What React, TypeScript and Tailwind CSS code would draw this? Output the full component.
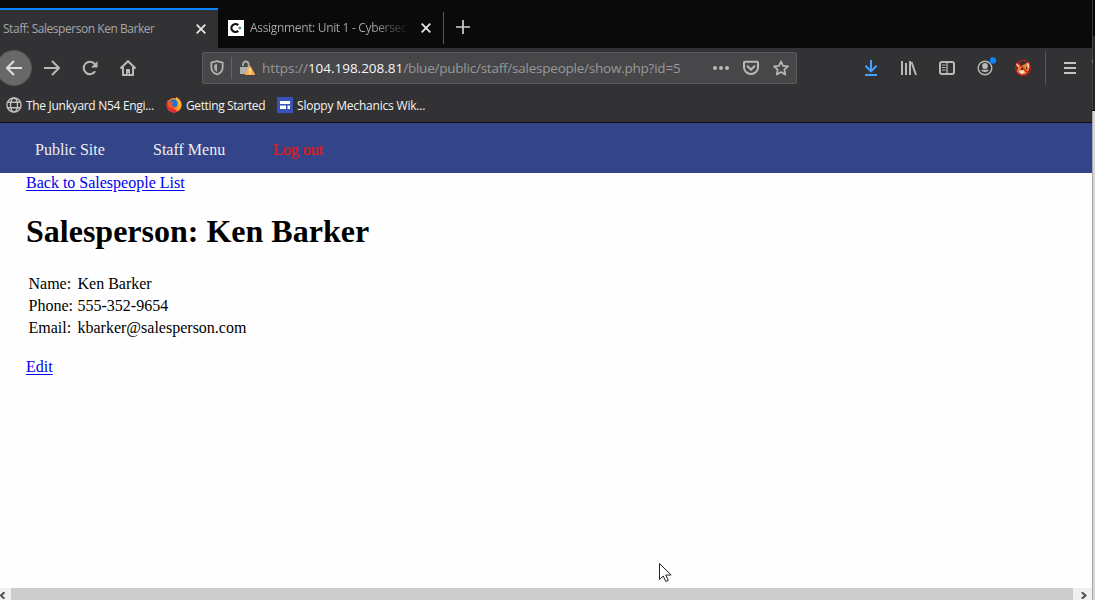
import React from "react";

const ui = "font-['Open_Sans','Noto_Sans',sans-serif] whitespace-nowrap";
const ico = "fill-none stroke-[#b9b9b7] stroke-2 shrink-0";

function CloseIcon() {
  return (
    <svg className="h-[10px] w-[10px] shrink-0 fill-none stroke-[#e6e6e4] stroke-[1.8]" viewBox="0 0 10 10">
      <path d="M.7.7 9.3 9.3M9.3.7.7 9.3" />
    </svg>
  );
}

function Tabs() {
  return (
    <div className="flex h-12 bg-[#0a0a0a] pt-2">
      <div className="flex w-[218px] items-center border-t-2 border-[#0a84ff] bg-[#323234] pl-[3px]">
        <span className={`${ui} w-[193px] text-[12px] leading-[38px] tracking-[-0.46px] text-[#a6a5ab]`}>Staff: Salesperson Ken Barker</span>
        <CloseIcon />
      </div>
      <div className="flex w-[225px] items-center pl-[10px]">
        <svg className="mr-[6px] h-4 w-4 shrink-0" viewBox="0 0 16 16">
          <path fill="#fff" d="M0 0h16v16H0z" />
          <path d="M10.2 5.1A4 4 0 1 0 10.2 10.9" fill="none" stroke="#111" strokeWidth="2.2" />
          <circle cx="11.8" cy="8" r="1.4" fill="#4d8c8c" />
        </svg>
        <span className="w-[160px] shrink-0">
          <span className={`${ui} inline-block bg-gradient-to-r from-[#a8a8a8] from-80% to-[#1c1c1c] bg-clip-text text-[12px] leading-10 tracking-[-0.33px] text-transparent`}>Assignment: Unit 1 - Cybersec</span>
        </span>
        <span className="w-[11px] shrink-0" />
        <CloseIcon />
      </div>
      <div className="mt-1 h-8 w-px bg-[#58585c]" />
      <svg className="mt-3 ml-3 h-[14px] w-[14px] fill-none stroke-[#cfcfcd] stroke-[1.7]" viewBox="0 0 14 14">
        <path d="M7 0v14M0 7h14" />
      </svg>
    </div>
  );
}

function Toolbar() {
  return (
    <div className="flex h-10 items-center bg-[#323234]">
      <div className="-ml-1 flex h-9 w-9 shrink-0 items-center justify-center rounded-full border border-[#565657] bg-[#68686a]">
        <svg className={`${ico} h-4 w-4 stroke-[#dededc]`} viewBox="0 0 16 16"><path d="M16 8H1M8 1 1 8l7 7" /></svg>
      </div>
      <svg className={`${ico} ml-3 h-4 w-4`} viewBox="0 0 16 16"><path d="M0 8h15M8 1l7 7-7 7" /></svg>
      <svg className={`${ico} ml-[22px] h-4 w-4`} viewBox="0 0 16 16">
        <path d="M13.2 11.2A6.2 6.2 0 1 1 12.7 4" />
        <path d="M15.5 1v6.5H9z" fill="#b9b9b7" stroke="none" />
      </svg>
      <svg className={`${ico} ml-[22px] h-4 w-4`} viewBox="0 0 16 16">
        <path d="M.4 8.6 8 1.2l7.6 7.4M3 7v8h10V7" />
        <path d="M6 9h4v6H8.8v-2H7.6v2H6z" fill="#b9b9b7" stroke="none" />
      </svg>
      <div className="ml-[66px] flex h-8 w-[595px] shrink-0 items-center rounded-[2px] border border-[#5c5c5e] bg-[#474749] pl-[7px]">
        <svg className="h-4 w-[14px] shrink-0 fill-none stroke-[#b0b0ae] stroke-[1.8]" viewBox="0 0 14 16">
          <path d="M7 1.2 12.7 2.6V7c0 4-2.2 6.3-5.7 7.4C3.5 13.3 1.3 11 1.3 7V2.6z" strokeLinejoin="round" />
          <path d="M7 4 4.2 4.7V7c0 2.400 1 3.900 2.800 4.900z" fill="#b0b0ae" stroke="none" />
        </svg>
        <div className="ml-[7px] h-[22px] w-px bg-[#5e6672]" />
        <svg className="ml-[8px] h-4 w-4 shrink-0" viewBox="0 0 16 16">
          <path d="M3 6V4.300a2.800 2.800 0 0 1 5.600 0V7.500" fill="none" stroke="#b0b0ae" strokeWidth="1.8" />
          <path d="M0 7h9v7H0z" fill="#b0b0ae" />
          <path d="M10 6 14.700 14.500H5.300z" fill="#ffab45" stroke="#ffab45" />
          <path d="M9.300 8.500h1.400v3H9.300zM9.300 12.500h1.400v1.400H9.300z" fill="#fff" />
        </svg>
        <span className={`${ui} ml-[6px] w-[451px] text-[13.5px] leading-[30px] tracking-[-0.02px] text-[#98989a]`}>
          https://<span className="text-[#f5f5f5]">104.198.208.81</span><span className="tracking-[-0.23px]">/blue/public/staff/salespeople/show.php?id=5</span>
        </span>
        <svg className="h-4 w-4 shrink-0 fill-[#b9b9b7]" viewBox="0 0 16 16"><circle cx="2" cy="8" r="2" /><circle cx="8" cy="8" r="2" /><circle cx="14" cy="8" r="2" /></svg>
        <svg className={`${ico} ml-[14px] h-4 w-4`} viewBox="0 0 16 16">
          <path d="M2 1.700h12a1 1 0 0 1 1 1V7.500a7 6.500 0 0 1-14 0V2.700a1 1 0 0 1 1-1z" /><path d="m4.500 6.300 3.500 3.300 3.500-3.300" strokeLinecap="round" />
        </svg>
        <svg className="ml-[14px] h-4 w-4 shrink-0 fill-none stroke-[#b9b9b7] stroke-[1.7]" viewBox="0 0 16 16">
          <path d="m8 1.300 2 4.600 5 .5-3.700 3.300 1 4.900L8 12.100l-4.300 2.500 1-4.900L1 6.400l5-.5z" strokeLinejoin="round" />
        </svg>
      </div>
      <svg className="ml-[66px] h-4 w-4 shrink-0 fill-none stroke-[#45a1ff] stroke-2" viewBox="0 0 16 16"><path d="M8 0v11M2.500 5.800 8 11.300l5.500-5.500M2 15h12" /></svg>
      <svg className={`${ico} ml-[22px] h-4 w-4`} viewBox="0 0 16 16"><path d="M1 1v14M5 3v12M9 1v14M10.500 2l4.500 13" /></svg>
      <svg className={`${ico} ml-[22px] h-4 w-4`} viewBox="0 0 16 16"><rect x="1" y="2" width="14" height="12" rx="2" /><path d="M8 2v12" strokeWidth="1.300" /><path d="M3 5h3.500M3 7.500h3.500M3 10h3.500" strokeWidth="1" /></svg>
      <svg className="-mt-[3px] ml-[22px] h-[19px] w-[19px] shrink-0" viewBox="0 0 19 19">
        <circle cx="8" cy="11" r="6.800" fill="none" stroke="#b9b9b7" strokeWidth="1.400" />
        <circle cx="8" cy="9" r="2.900" fill="#b9b9b7" />
        <path d="M3.800 12.800h8.400a4.800 4.800 0 0 1-8.400 0z" fill="#b9b9b7" />
        <circle cx="16" cy="3.500" r="3.200" fill="#0a84ff" />
      </svg>
      <svg className="ml-[19px] h-4 w-4 shrink-0" viewBox="0 0 16 16">
        <path d="M3 7 2 3l4 3 4-2 3-2 1 4v4l-3 4-5 1-4-3z" fill="#df8431" />
        <path d="m1 3 2 1 1 3-3-1zM12 3l2-1 1 5-2 1zM4 11l4-1 2 3-4 1z" fill="#f2dccb" />
        <path d="M6 8h2v2H6zM11 7h1v2h-1z" fill="#55301d" />
        <circle cx="8" cy="8" r="7.300" fill="none" stroke="#e01818" strokeWidth="1.300" strokeDasharray="3 .8" />
        <path d="m3 3 10 10" stroke="#e01818" strokeWidth="1.300" />
      </svg>
      <div className="ml-[14px] h-[34px] w-px bg-[#58585a]" />
      <svg className="ml-[18px] h-3 w-3 shrink-0 fill-none stroke-[#c4c4c2] stroke-2" viewBox="0 0 12 12"><path d="M0 1h12M0 6h12M0 11h12" /></svg>
    </div>
  );
}

function Bookmarks() {
  const label = `${ui} pt-px text-[12px] leading-[34px] text-[#f4f4f2]`;
  return (
    <div className="flex h-[35px] items-center border-b border-[#0b0b12] bg-[#323234] pl-[6px]">
      <svg className="h-4 w-4 shrink-0 fill-none stroke-[#c0c0be] stroke-[1.4]" viewBox="0 0 16 16">
        <circle cx="8" cy="8" r="7.100" /><ellipse cx="8" cy="8" rx="3.500" ry="7" /><path d="M1.500 5.300h13M1.500 10.700h13" />
      </svg>
      <span className={`${label} ml-1 w-[140px] tracking-[-0.3px]`}>The Junkyard N54 Engi...</span>
      <svg className="h-4 w-4 shrink-0" viewBox="0 0 16 16">
        <circle cx="8" cy="8.300" r="7.300" fill="#ff8a22" />
        <path d="M1.500 3c-2 4-.9 10 4 12 4 1.500 7.500-.5 9-3-4 2-8 .5-8.500-3z" fill="#e6293b" />
        <path d="M10 0c4 2 6 5 5.500 9-1 4-4 5-6 5 3-2 4-5 2-8-1-2-2-3-1.500-6z" fill="#ffb52d" />
        <circle cx="7.600" cy="6.500" r="4" fill="#1677d8" />
        <path d="M1.500 3.500 4.500 5l3 .5-1.500 2 1 2 3 .5c-3 3-8 1-8-3z" fill="#f5592a" />
      </svg>
      <span className={`${label} ml-1 w-[91px] tracking-[-0.38px]`}>Getting Started</span>
      <svg className="h-4 w-4 shrink-0" viewBox="0 0 16 16"><path fill="#3a51b5" d="M0 0h16v16H0z" /><path fill="#fff" d="M3 4h10v3H3zM3 8.500h6V12H3zM10.500 8.500H13V12h-2.500z" /></svg>
      <span className={`${label} ml-1 tracking-[-0.2px]`}>Sloppy Mechanics Wik...</span>
    </div>
  );
}

export default function App() {
  return (
    <div className="relative flex h-[600px] w-[1095px] overflow-hidden bg-white">
      <div className="flex w-[1092px] flex-col">
        <Tabs />
        <Toolbar />
        <Bookmarks />
        <div className="flex h-[50px] shrink-0 items-center bg-[#334488] pt-1 pl-[35px] font-['Liberation_Serif',serif] text-[16px] text-[#eeeeee]">
          <span className="w-[118px]">Public Site</span>
          <span className="w-[120px]">Staff Menu</span>
          <span className="text-[#e62222] [text-shadow:1px_0_0_#7a2540]">Log out</span>
        </div>
        <main className="flex-1 bg-[#fefefe] pl-[26px] font-['Liberation_Serif',serif] text-[16px] leading-[18px] text-black">
          <div className="pt-px"><a className="text-[#0000ee] underline underline-offset-2">Back to Salespeople List</a></div>
          <h1 className="mt-[21px] text-[32px] leading-[36px] font-bold">Salesperson: Ken Barker</h1>
          <dl className="mt-[26px] grid grid-cols-[49px_auto] gap-y-1 pl-[2.5px]">
            <dt>Name:</dt><dd>Ken Barker</dd>
            <dt>Phone:</dt><dd>555-352-9654</dd>
            <dt>Email:</dt><dd>kbarker@salesperson.com</dd>
          </dl>
          <div className="mt-[21px]"><a className="text-[#0000ee] underline underline-offset-2">Edit</a></div>
        </main>
        <div className="flex h-3 shrink-0 bg-[#cdcdcd]">
          <div className="w-[11px] bg-[#f0f0f0]"><svg className="mt-1 h-[7px] w-[5px] fill-none stroke-[#505050] stroke-2" viewBox="0 0 5 7"><path d="M4.500.2 1 3.500l3.500 3.300" /></svg></div>
          <div className="flex-1" />
          <div className="w-[19px] bg-[#f0f0f0] pl-2"><svg className="mt-1 h-[7px] w-[6px] fill-none stroke-[#505050] stroke-2" viewBox="0 0 6 7"><path d="M.8.2 4.500 3.500.8 6.800" /></svg></div>
        </div>
      </div>
      <div className="flex w-[3px] flex-col">
        <div className="h-9 border-l border-[#3a3a3c] bg-[#050505]" />
        <div className="h-6 border-l border-[#444446] bg-[#222426]" />
        <div className="h-[3px] border-l border-[#77777a] bg-[#222426]" />
        <div className="h-[47px] border-l border-[#444446] bg-[#222426]" />
        <div className="h-px bg-[#050505]" />
        <div className="flex-1 border-l border-[#a6a6a6] bg-[#d8d8d8]" />
      </div>
      <svg className="absolute top-[563px] left-[659px] h-[20px] w-[13px]" viewBox="0 0 13 20">
        <path d="M.5.5v16l3.700-3.500 2.600 5.500 2.500-1.100L6.800 12h5.300z" fill="#fff" stroke="#222" />
      </svg>
    </div>
  );
}
